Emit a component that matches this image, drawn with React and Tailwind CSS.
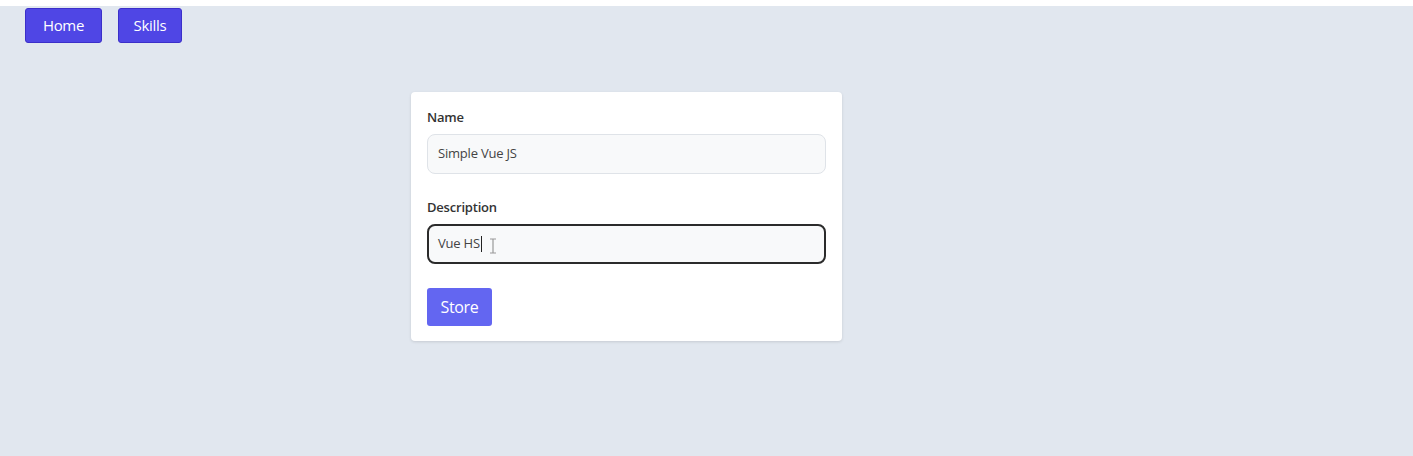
export default function App() {
  /*
  |--------------------------------------------------------------------------
  | UI
  |--------------------------------------------------------------------------
  */

  return (
    <div
      className="min-h-[456px] bg-white pt-[6px]"
      style={{ fontFamily: '"Open Sans", "Noto Sans", sans-serif' }}
    >
      <div className="min-h-[450px] bg-[#e1e7ef]">
        {/* Nav */}

        <nav className="flex gap-4 pl-[25px] pt-[2px]">
          <button className="h-[35px] w-[77px] rounded-[3px] border border-[#3b2fc9] bg-[#4f46e5] text-[15px] tracking-[-0.3px] text-white">
            Home
          </button>

          <button className="h-[35px] w-[64px] rounded-[3px] border border-[#3b2fc9] bg-[#4f46e5] text-[15px] tracking-[-0.3px] text-white">
            Skills
          </button>
        </nav>

        {/* Form Card */}

        <div className="ml-[411px] mt-[49px] w-[431px] rounded-[4px] bg-white px-4 pt-[16px] pb-[15px] shadow-[0_1px_3px_rgba(0,0,0,0.12)]">
          <label className="block text-[13px] font-semibold leading-[18px] tracking-[-0.2px] text-[#333]">
            Name
          </label>

          <div className="mt-[8px] flex h-[40px] items-center rounded-[8px] border border-[#dfe3e8] bg-[#f8f9fa] px-[10px] text-[13px] tracking-[-0.2px] text-[#444]">
            Simple Vue JS
          </div>

          <label className="mt-[24px] block text-[13px] font-semibold leading-[18px] tracking-[-0.2px] text-[#333]">
            Description
          </label>

          <div className="relative mt-[8px] flex h-[40px] items-center rounded-[8px] border-2 border-[#2b2b2b] bg-[#f8f9fa] px-[9px] text-[13px] tracking-[-0.2px] text-[#444]">
            Vue HS
            <span className="ml-[1px] inline-block h-[16px] w-px bg-[#222]" />
            <svg
              className="absolute left-[60px] top-[12px]"
              width="8"
              height="16"
              viewBox="0 0 8 16"
              fill="none"
              stroke="#9a9a9a"
              strokeWidth="1.2"
            >
              <path d="M1 1h6M4 1v14M1 15h6" />
            </svg>
          </div>

          <button className="mt-[24px] h-[38px] w-[65px] rounded-[3px] bg-[#6366f1] text-[16px] tracking-[-0.3px] text-white">
            Store
          </button>
        </div>
      </div>
    </div>
  );
}
